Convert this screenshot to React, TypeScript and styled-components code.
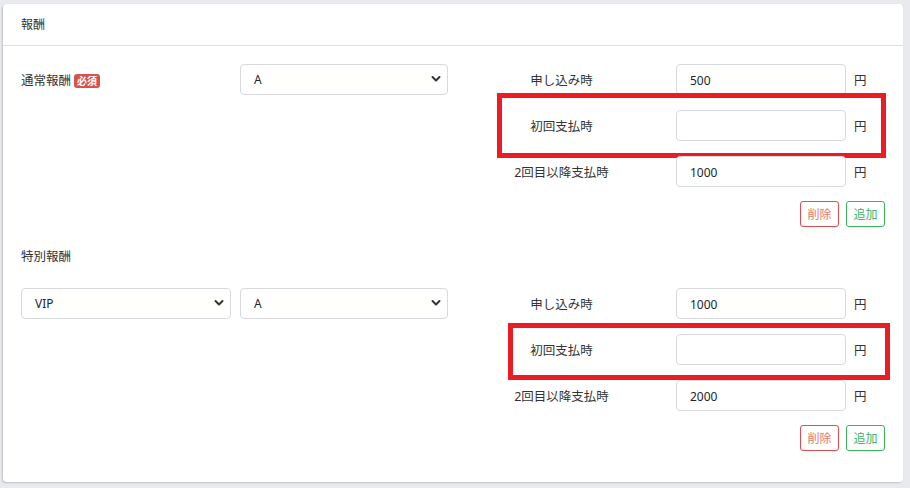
import styled, { createGlobalStyle } from "styled-components";

const GlobalStyle = createGlobalStyle`
  html, body {
    margin: 0;
    padding: 0;
    background: #e9eaed;
  }
  body {
    font-family: "Noto Sans", "Noto Sans CJK JP", sans-serif;
    color: #212529;
    font-size: 12px;
  }
  * {
    box-sizing: border-box;
  }
`;

const Style = {
  Page: styled.div`
    width: 910px;
    height: 488px;
    padding: 4px 7px 6px 3px;
  `,
  Card: styled.div`
    background: #fff;
    border-radius: 4px;
    box-shadow: -1px 1px 2px rgba(0, 0, 0, 0.18);
    height: 478px;
  `,
  Header: styled.div`
    height: 42px;
    display: flex;
    align-items: center;
    padding: 0 18px 2px;
    border-bottom: 1px solid #dcdee2;
    font-size: 12px;
    color: #333;
  `,
  Body: styled.div`
    padding: 18px 18px 0;
  `,
  Section: styled.div<{ $gapTop?: number }>`
    display: grid;
    grid-template-columns: 210px 208px 1fr;
    column-gap: 9px;
    align-items: start;
    margin-top: ${(p) => p.$gapTop ?? 0}px;
  `,
  Title: styled.div`
    grid-column: 1 / -1;
    font-size: 12.5px;
    line-height: 18px;
    margin-bottom: 22px;
    color: #333;
  `,
  Label: styled.div`
    height: 31px;
    display: flex;
    align-items: center;
    gap: 3px;
    font-size: 12.5px;
    color: #333;
  `,
  Badge: styled.span`
    display: inline-flex;
    align-items: center;
    height: 14px;
    padding: 0 3px;
    border-radius: 3px;
    background: #db4f50;
    color: #fff;
    font-size: 10px;
    font-weight: 700;
    margin-top: 2px;
  `,
  SelectWrap: styled.div`
    position: relative;
    height: 31px;
  `,
  Select: styled.select`
    appearance: none;
    width: 100%;
    height: 31px;
    border: 1px solid #d6d9de;
    border-radius: 4px;
    background: #fff;
    padding: 0 28px 0 13px;
    font-family: "Noto Sans", "Noto Sans CJK JP", sans-serif;
    font-size: 12px;
    color: #212529;
    outline: none;
  `,
  Chevron: styled.svg`
    position: absolute;
    right: 7px;
    top: 11px;
    pointer-events: none;
  `,
  Prices: styled.div`
    display: flex;
    flex-direction: column;
    gap: 15px;
  `,
  PriceRow: styled.div`
    position: relative;
    display: flex;
    align-items: center;
    height: 31px;
  `,
  PriceLabel: styled.div`
    width: 209px;
    text-align: center;
    font-size: 12.5px;
    color: #333;
    margin-right: 10px;
  `,
  Input: styled.input`
    width: 170px;
    height: 31px;
    border: 1px solid #d6d9de;
    border-radius: 4px;
    padding: 2px 13px 0;
    font-family: "Noto Sans", "Noto Sans CJK JP", sans-serif;
    font-size: 12px;
    color: #212529;
    outline: none;
  `,
  Unit: styled.span`
    margin-left: 8px;
    font-size: 12.5px;
    color: #333;
  `,
  Highlight: styled.div<{ $t: number; $l: number; $r: number; $b: number }>`
    position: absolute;
    top: ${(p) => p.$t}px;
    left: ${(p) => p.$l}px;
    right: ${(p) => p.$r}px;
    bottom: ${(p) => p.$b}px;
    border: 5px solid #ec1c24;
    pointer-events: none;
  `,
  Actions: styled.div`
    display: flex;
    justify-content: flex-end;
    gap: 7px;
    margin-top: -1px;
  `,
  Button: styled.button<{ $tone: "danger" | "success" }>`
    height: 26px;
    width: 39px;
    padding: 0;
    background: #fff;
    border-radius: 3px;
    font-family: "Noto Sans", "Noto Sans CJK JP", sans-serif;
    font-size: 12px;
    border: 1px solid ${(p) => (p.$tone === "danger" ? "#dc4b52" : "#3cb55a")};
    color: ${(p) => (p.$tone === "danger" ? "#e07a70" : "#44b46a")};
    cursor: pointer;
  `,
};

type Hl = { t: number; l: number; r: number; b: number };

const Chevron = () => (
  <Style.Chevron width="10" height="8" viewBox="0 0 10 8">
    <path d="M1.5 2 L5 5.5 L8.5 2" fill="none" stroke="#333" strokeWidth="2" strokeLinecap="round" strokeLinejoin="round" />
  </Style.Chevron>
);

function SelectBox({ value }: { value: string }) {
  return (
    <Style.SelectWrap>
      <Style.Select defaultValue={value}>
        <option value={value}>{value}</option>
      </Style.Select>
      <Chevron />
    </Style.SelectWrap>
  );
}

function PriceBlock({ values, hl }: { values: string[]; hl: Hl }) {
  const labels = ["申し込み時", "初回支払時", "2回目以降支払時"];
  return (
    <Style.Prices>
      {labels.map((label, i) => (
        <Style.PriceRow key={label}>
          <Style.PriceLabel>{label}</Style.PriceLabel>
          <Style.Input defaultValue={values[i]} />
          <Style.Unit>円</Style.Unit>
          {i === 1 && <Style.Highlight $t={hl.t} $l={hl.l} $r={hl.r} $b={hl.b} />}
        </Style.PriceRow>
      ))}
      <Style.Actions>
        <Style.Button $tone="danger">削除</Style.Button>
        <Style.Button $tone="success">追加</Style.Button>
      </Style.Actions>
    </Style.Prices>
  );
}

export default function App() {
  return (
    <>
      <GlobalStyle />
      <Style.Page>
        <Style.Card>
          <Style.Header>報酬</Style.Header>
          <Style.Body>
            <Style.Section>
              <Style.Label>
                通常報酬<Style.Badge>必須</Style.Badge>
              </Style.Label>
              <SelectBox value="A" />
              <PriceBlock values={["500", "", "1000"]} hl={{ t: -17, l: 40, r: -1, b: -17 }} />
            </Style.Section>

            <Style.Section $gapTop={21}>
              <Style.Title>特別報酬</Style.Title>
              <SelectBox value="VIP" />
              <SelectBox value="A" />
              <PriceBlock values={["1000", "", "2000"]} hl={{ t: -11, l: 51, r: -5, b: -15 }} />
            </Style.Section>
          </Style.Body>
        </Style.Card>
      </Style.Page>
    </>
  );
}
